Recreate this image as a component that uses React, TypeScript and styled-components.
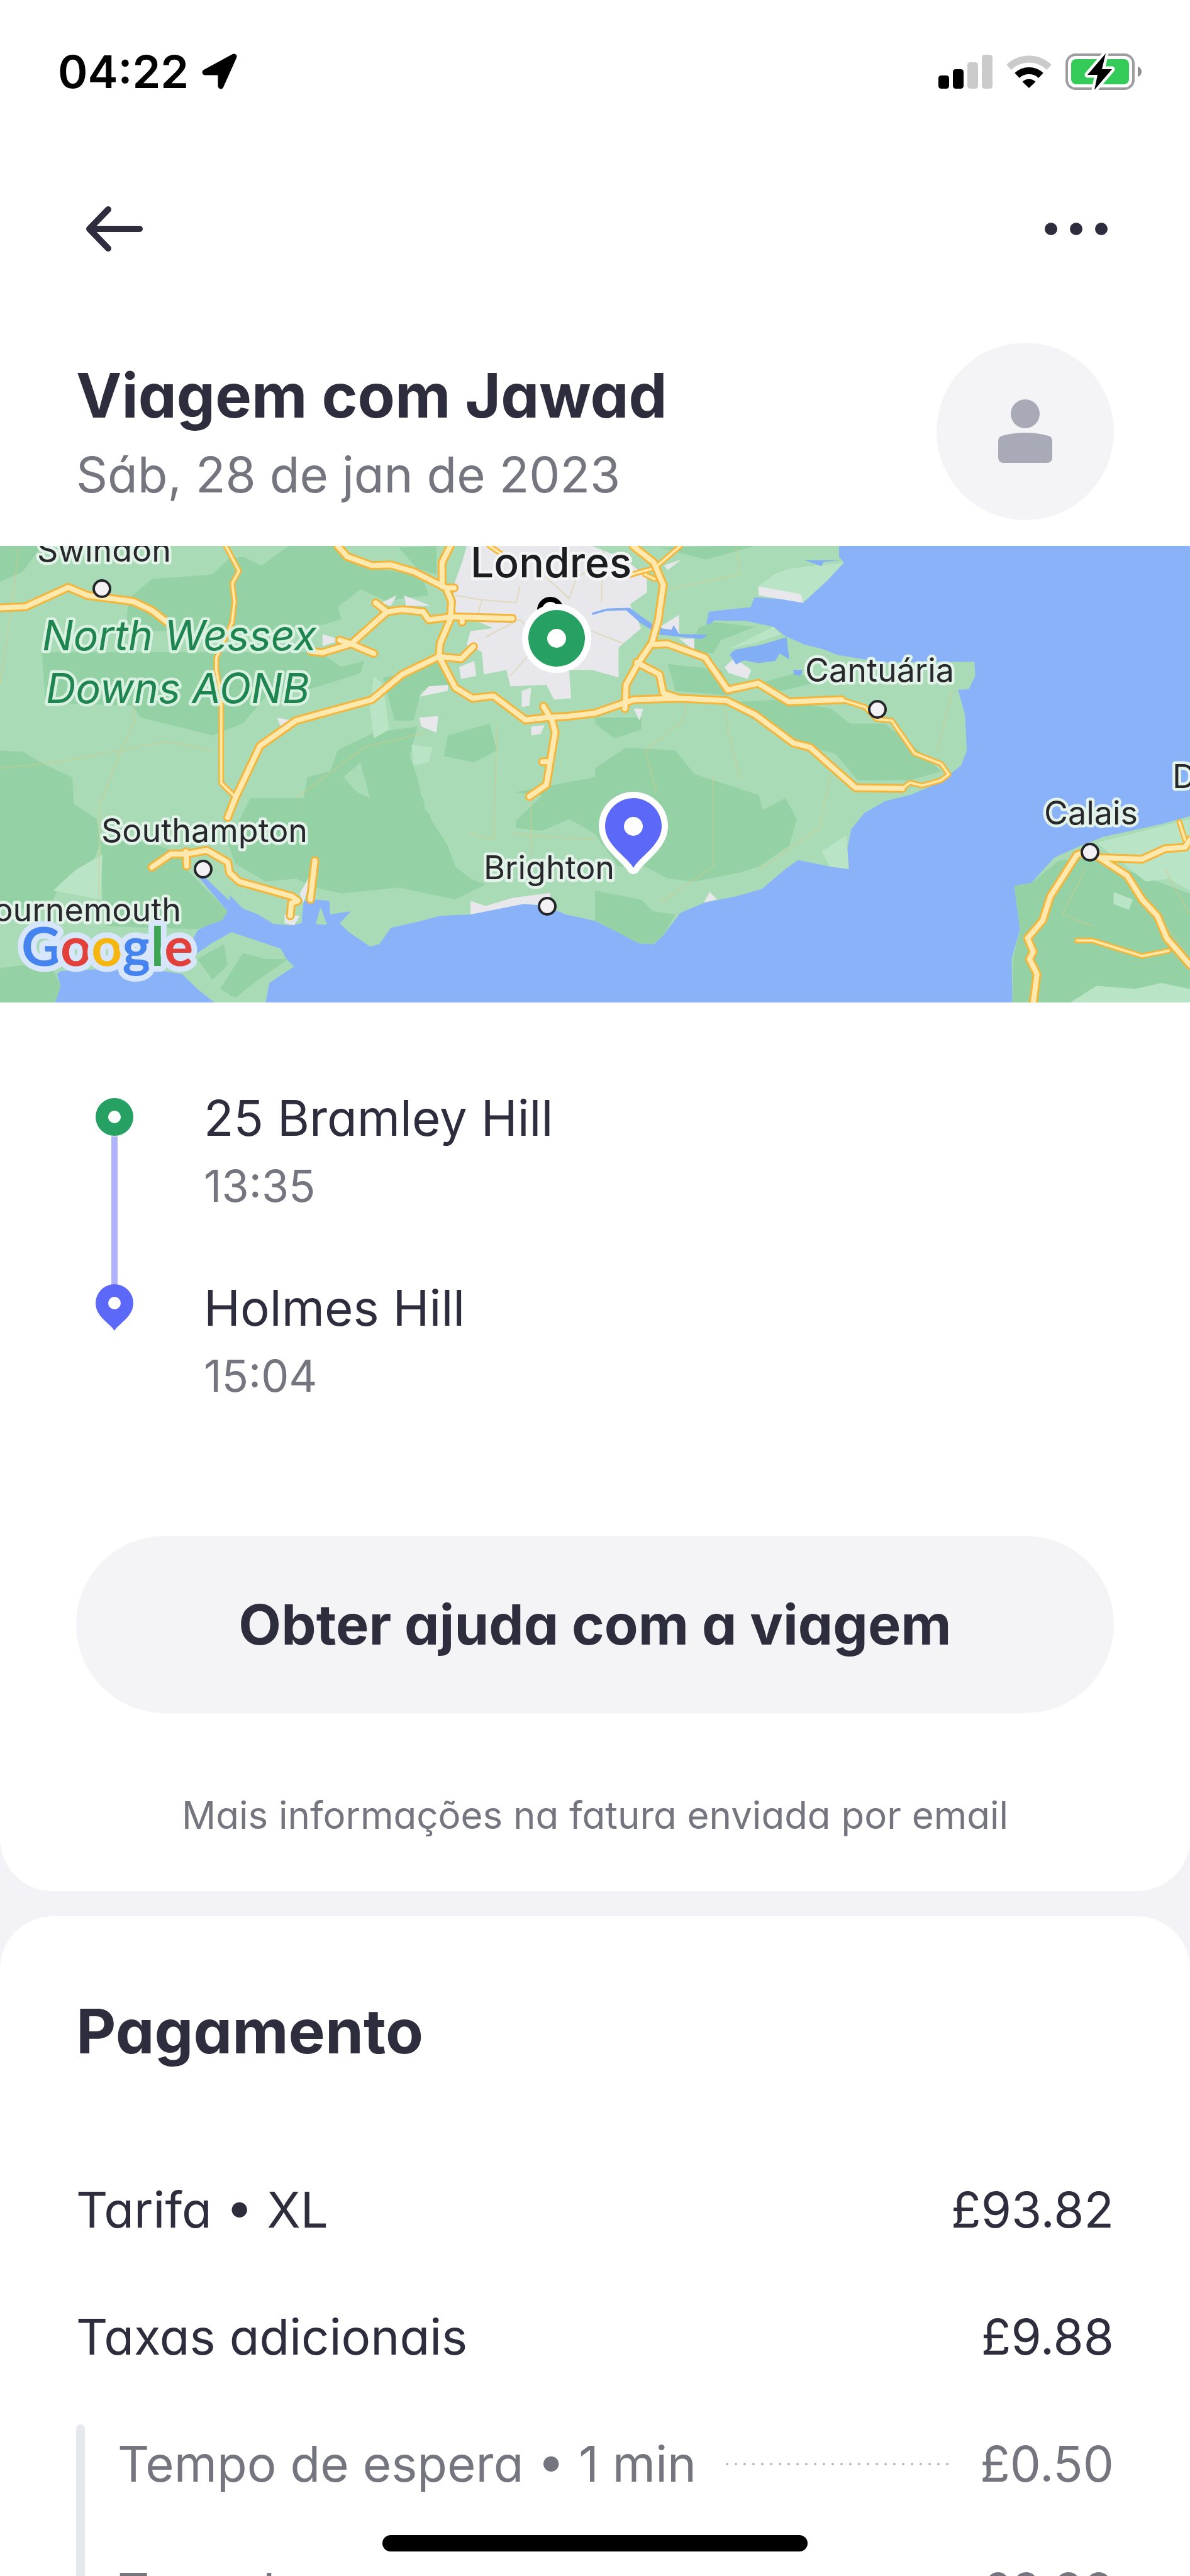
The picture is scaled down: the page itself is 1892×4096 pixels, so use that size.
import React from "react";
import styled, { createGlobalStyle } from "styled-components";

const color = {
  ink: "#2e2d3d",
  muted: "#74757e",
  surface: "#f4f4f7",
  canvas: "#f3f3f7",
  green: "#27a063",
  violet: "#5c68f8",
  violetSoft: "#b0b3fb",
  rule: "#e7e7ee",
};

const GlobalStyle = createGlobalStyle`
  *, *::before, *::after { box-sizing: border-box; }
  body { margin: 0; background: ${color.canvas}; }
  h1, h2, p, ul, ol { margin: 0; padding: 0; }
  ul, ol { list-style: none; }
  button { border: 0; padding: 0; background: none; font: inherit; color: inherit; cursor: pointer; }
  svg { display: block; }
`;

const Screen = styled.main`
  display: flex;
  flex-direction: column;
  gap: 40px;
  height: 100vh;
  overflow: hidden;
  background: ${color.canvas};
  color: ${color.ink};
  font-family: Inter, "Liberation Sans", sans-serif;
  font-feature-settings: "cv11";
  font-size: 78px;
  line-height: 108px;
`;

const Card = styled.section<{ $edge: "top" | "bottom" }>`
  flex: ${(p) => (p.$edge === "top" ? "none" : "1 0 auto")};
  background: #fff;
  border-radius: ${(p) => (p.$edge === "top" ? "0 0 84px 84px" : "84px 84px 0 0")};
`;

/* ---------- status bar ---------- */

const StatusBar = styled.div`
  display: flex;
  align-items: center;
  justify-content: space-between;
  height: 228px;
  padding: 0 76px 0 92px;
  color: #000;
`;

const StatusGroup = styled.div<{ $gap: number }>`
  display: flex;
  align-items: center;
  gap: ${(p) => p.$gap}px;
`;

const Clock = styled.time`
  font-size: 72px;
  font-weight: 600;
`;

const LocationIcon = () => (
  <svg width="60" height="60" viewBox="0 0 60 60" aria-hidden="true">
    <path d="M52 6 31 53V31H6Z" fill="#000" stroke="#000" strokeWidth="9" strokeLinejoin="round" />
  </svg>
);

const SignalIcon = () => (
  <svg width="86" height="56" viewBox="0 0 86 56" aria-hidden="true">
    <rect x="0" y="34" width="17" height="21" rx="4.5" fill="#000" />
    <rect x="23" y="24" width="17" height="31" rx="4.5" fill="#000" />
    <rect x="46" y="13" width="17" height="42" rx="4.5" fill="#cbcbcb" />
    <rect x="69" y="1" width="17" height="54" rx="4.5" fill="#cbcbcb" />
  </svg>
);

const WifiIcon = () => (
  <svg width="74" height="56" viewBox="0 0 74 56" aria-hidden="true">
    <g fill="none" strokeWidth="11">
      <path d="M5 21A46 46 0 0 1 69 21" stroke="#cbcbcb" />
      <path d="M18 34A28 28 0 0 1 56 34" stroke="#000" />
    </g>
    <path d="M37 54 26.500 44A15 15 0 0 1 47.500 44Z" fill="#000" />
  </svg>
);

const BatteryIcon = () => (
  <svg width="122" height="60" viewBox="0 0 122 60" aria-hidden="true">
    <rect x="2" y="3" width="106" height="54" rx="14" fill="none" stroke="#9d9d9f" strokeWidth="4" />
    <rect x="9" y="10" width="92" height="40" rx="8" fill="#34cb59" />
    <path d="M115 22C123 24 123 36 115 38Z" fill="#8f8f92" />
    <path
      d="M64 1 35 35H51L46 59 74 26H58Z"
      fill="#000"
      stroke="#fff"
      strokeWidth="9"
      strokeLinejoin="round"
      paintOrder="stroke"
    />
  </svg>
);

/* ---------- navigation and title ---------- */

const NavBar = styled.nav`
  display: flex;
  align-items: center;
  justify-content: space-between;
  height: 272px;
  padding: 0 121px;
`;

const IconButton = styled.button`
  width: 120px;
  height: 120px;
`;

const Header = styled.header`
  display: flex;
  align-items: flex-start;
  justify-content: space-between;
  padding: 45px 121px 41px;
`;

const TitleBlock = styled.div`
  padding-top: 24px;
`;

const Title = styled.h1`
  font-size: 97px;
  line-height: 120px;
  font-weight: 700;
`;

const TripDate = styled.p`
  line-height: 132px;
  color: ${color.muted};
`;

const Avatar = styled.div`
  display: grid;
  place-items: center;
  width: 282px;
  height: 282px;
  border-radius: 50%;
  background: ${color.surface};
`;

/* ---------- map ---------- */

const MapFrame = styled.div`
  height: 726px;
  overflow: hidden;
  background: #89b2f8;

  svg {
    width: 100%;
    height: 100%;
  }
`;

const MapText = styled.text<{ $size?: number }>`
  font-family: Inter, "Liberation Sans", sans-serif;
  font-feature-settings: normal;
  font-size: ${(p) => p.$size ?? 52}px;
  fill: #26282b;
  stroke: #e4f3ea;
  stroke-width: 9px;
  stroke-linejoin: round;
  paint-order: stroke;
`;

const CapitalText = styled(MapText)`
  font-weight: 500;
  fill: #1c1d20;
  stroke: #f4f4f5;
`;

const ParkText = styled(MapText)`
  font-style: italic;
  fill: #1f8550;
  stroke: #d9f1e0;
`;

const BrandText = styled.text`
  font-family: Lato, "Liberation Sans", sans-serif;
  font-size: 86px;
  font-weight: 700;
  stroke: #d8e6fb;
  stroke-width: 18px;
  stroke-linejoin: round;
  paint-order: stroke;
`;

const plot = (grid: string) =>
  grid
    .trim()
    .split(/\s+/)
    .map((pair) => {
      const [x, y] = pair.split(",").map(Number);
      return `${(x * 0.6033).toFixed(1)},${((y - 14) * 0.474).toFixed(1)}`;
    })
    .join(" ");

const land = [
  "0,14 2211,14 2211,50 2224,70 2180,130 2116,205 2060,192 1988,187 1978,220 1913,228 1868,235 1858,300 1808,318 1740,305 1808,322 1868,310 1880,264 1968,266 2038,285 2068,315 2120,345 2168,360 2208,380 2328,405 2568,402 2570,450 2553,495 2525,497 2543,580 2548,700 2533,750 2473,810 2398,850 2333,870 2278,910 2243,965 2233,1030 2237,1098 2188,1090 2103,1068 2068,1100 2008,1165 1938,1190 1858,1210 1793,1245 1748,1320 1723,1350 1688,1348 1628,1310 1568,1272 1490,1250 1440,1222 1380,1215 1300,1235 1240,1250 1160,1255 1100,1275 1030,1295 1000,1350 975,1358 920,1310 895,1280 925,1240 870,1250 868,1205 830,1200 800,1205 795,1280 765,1287 720,1282 680,1250 640,1230 605,1185 605,1205 560,1150 540,1125 520,1120 560,1180 600,1240 585,1270 545,1285 520,1305 510,1330 430,1410 330,1430 160,1440 150,1450 160,1490 145,1546 0,1546",
  "610,1310 670,1335 740,1365 755,1400 775,1425 710,1480 700,1546 565,1546 520,1500 480,1450 430,1440 440,1420 520,1380 560,1345",
  "845,1225 862,1285 832,1283",
  "2668,1546 2666,1400 2688,1300 2673,1155 2718,1145 2778,1060 2848,1020 2908,990 3068,945 3136,920 3136,1546",
];

const woodland = [
  "0,14 110,14 60,100 0,135",
  "0,700 60,705 130,755 190,790 195,880 255,930 265,1010 250,1060 160,1150 140,1200 100,1230 0,1230",
  "265,1000 400,1010 480,1050 500,1110 570,1200 600,1240 585,1270 520,1300 280,1290 270,1200",
  "340,190 400,125 560,110 600,60 640,50 690,80 760,14 900,14 920,60 980,90 1110,110 1130,180 1060,190 1020,200 950,160 890,220 900,260 820,290 600,300 330,300",
  "110,370 840,370 900,420 960,400 950,440 880,470 800,500 700,520 640,610 560,650 500,630 370,590 350,550 120,540",
  "985,640 1100,620 1080,720 1100,790 1110,850 1140,940 1180,1020 1200,1090 1240,1130 1280,1150 1200,1200 1050,1160 900,1180 830,1160 780,1130 700,1140 620,1080 600,1010 660,860 800,860 810,790 870,770 890,700",
  "1180,650 1290,610 1310,700 1250,740 1170,720",
  "1010,455 1090,440 1150,400 1185,480 1110,500 1090,600 1040,600",
  "1360,840 1568,790 1568,980 1500,930 1430,970 1360,960",
  "1568,760 1650,690 1780,700 1830,780 1880,800 2000,850 2010,900 2070,860 2100,930 2080,1020 2000,1090 1950,1110 1830,1140 1760,1130 1700,1090 1630,1090 1568,980",
  "1900,540 2050,530 2190,560 2240,610 2330,610 2420,700 2480,770 2400,800 2260,800 2200,710 2130,690",
  "1760,410 1900,430 1930,500 2100,440 2160,470 2060,500 1990,480 1918,515 1780,500",
  "1840,290 1880,270 1990,285 1900,330 1880,375 1820,370",
  "1568,1170 1690,1200 1720,1240 1780,1250 1748,1320 1720,1350 1680,1345 1568,1270",
  "1568,590 1690,590 1690,630 1620,660 1568,610",
  "1740,20 1860,60 1990,14 1900,14",
  "1050,20 1150,14 1150,110 1100,90",
  "520,1400 590,1350 600,1420 560,1470",
  "640,1380 700,1400 760,1400 680,1470 620,1530 580,1500",
  "0,1430 130,1410 160,1490 145,1546 0,1546",
  "2668,1546 2670,1400 2688,1300 2673,1155 2718,1145 2790,1070 2880,1060 3136,1180 3136,1546",
];

const meadow = [
  "1998,150 2040,110 2080,90 2224,70 2180,130 2116,205",
  "1968,330 2038,285 2058,310 1990,340 1920,360",
  "140,1170 200,1100 270,1050 265,1200",
  "985,450 1010,480 1025,630 985,660 975,560",
  "1085,680 1140,690 1130,740 1090,750",
  "2165,1040 2230,985 2237,1098 2188,1090",
  "2890,1010 3060,955 3136,930 3136,1170 3080,1130 3020,1140 2960,1080",
  "2820,1546 2890,1490 2990,1500 3060,1480 3136,1500 3136,1546",
  "2935,1175 2985,1200 2975,1235 2935,1215",
];

const clearings = [
  "905,790 950,740 975,860 940,840",
  "1110,790 1200,750 1360,800 1350,840 1430,850 1340,960 1200,980 1120,900",
];

const urban = [
  "1220,60 1230,14 1560,14 1650,60 1705,120 1705,170 1660,210 1690,290 1630,355 1630,455 1560,430 1500,430 1505,525 1460,530 1440,480 1345,485 1335,430 1275,445 1270,370 1230,345 1240,300 1300,290 1200,235 1195,150",
  "1105,520 1130,485 1180,480 1180,500",
  "1105,590 1155,585 1150,640 1110,620",
  "1210,420 1250,400 1255,450 1215,460",
  "1375,500 1400,490 1395,550 1375,555",
  "1400,620 1435,615 1425,645 1400,650",
  "1065,180 1135,215 1070,215",
  "1005,205 1045,180 1030,215",
  "850,310 900,330 850,350",
  "1740,285 1790,245 1790,320",
  "1790,325 1830,325 1830,365",
  "1910,420 1935,390 1980,430 1970,460 1920,440",
  "1998,150 2110,175 2116,205 2000,180",
  "1670,560 1695,560 1685,600",
  "1750,80 1795,60 1760,95",
  "1240,1205 1280,1222 1350,1195 1450,1178 1450,1222 1380,1215 1300,1235 1240,1250",
  "1855,1210 1870,1175 1890,1200",
  "730,590 770,600 740,620",
  "790,1180 830,1090 800,1210",
  "750,1250 790,1255 775,1287 750,1280",
];

const inlets = [
  "1923,378 1938,362 2008,345 2073,320 2080,395 2055,375 2043,400 1998,407 1960,398 1940,412",
  "1560,238 1600,224 1660,222 1690,250 1735,290 1770,295 1775,280 1790,310 1865,312 1850,326 1740,312 1690,275 1650,230 1600,232 1560,246",
  "2090,430 2115,430 2110,450 2092,445",
  "2120,62 2215,62 2170,68 2165,82",
];

const lanes = [
  "0,760 150,740 440,670 560,700",
  "260,1200 262,880 320,700 355,600 350,540",
  "780,860 960,690 1120,640",
  "1310,620 1300,1000 1240,980",
  "1400,860 1400,1050",
  "1350,980 1568,1000",
  "1730,840 1700,700 1800,600 1810,540",
  "1910,560 1920,640 1950,790",
  "1880,790 1880,1090 1740,1210",
  "2190,780 2160,960 2000,1100",
  "2510,500 2470,700",
  "1940,20 1950,110 1760,160",
  "0,480 30,220 50,20",
  "1200,180 1270,195 1260,240",
  "1270,195 1360,205 1370,150",
  "1420,40 1440,120 1500,190",
  "1500,190 1520,120 1600,60",
  "1280,320 1370,260 1400,300",
  "1560,300 1640,340",
  "1345,450 1400,370",
  "1590,30 1585,200",
  "2860,1100 2800,1250 2880,1290",
  "3070,1100 3136,1250",
  "3080,1300 3136,1400",
];

const roads = [
  "1640,120 1680,104 1715,92",
  "1290,14 1320,40",
  "595,14 630,98 612,140 618,200 612,270 570,390 570,430 583,520 583,810 615,850",
  "2218,530 2280,555 2310,595 2350,600 2410,710 2480,745 2500,780 2480,800 2430,818 2398,808 2378,828",
  "2838,1338 2880,1338 3010,1390 3080,1372",
  "1793,14 1733,80",
  "3108,940 3123,1000",
  "1700,110 1725,125",
];

const motorways = [
  "0,222 68,218 180,153 230,180 350,200 400,230 445,275",
  "820,368 850,372 925,343 1020,235 1060,228 1115,235 1130,262 1190,252 1350,257",
  "990,205 1020,235",
  "895,330 925,343 985,375",
  "1187,14 1165,70 1165,150",
  "1175,155 1197,155",
  "890,14 915,50 980,80 1030,78 1090,100 1175,155 1190,200 1187,260 1160,340 1157,385 1200,490 1245,525 1300,517 1385,598 1440,590 1500,585 1568,575 1670,530 1790,525 1915,533 1990,580 2090,675 2135,690 2210,775 2255,825 2378,828",
  "1157,385 1215,393 1248,352",
  "1157,385 1060,445 980,530 780,600 685,685 620,860 600,925",
  "400,1092 450,1048 490,1048 545,1035 600,1075 605,1110 630,1140 770,1190 785,1205 768,1212 765,1255",
  "490,1040 492,1088",
  "830,1070 818,1200",
  "1432,552 1455,600 1463,640 1440,815 1395,855",
  "1430,738 1448,738",
  "1218,257 1218,270",
  "1668,14 1723,70 1748,145 1735,262 1718,340 1683,405 1650,480 1647,560",
  "1678,405 1738,445 1748,508 1790,525",
  "1718,345 1758,342 1858,388 1918,497 1998,475 2078,537 2218,530",
  "2868,1040 2838,1050 2768,1190 2748,1270 2708,1330 2723,1375 2713,1400 2733,1450 2723,1546",
  "2898,1060 3010,1065 3070,1030 3123,1025 3136,1000",
  "2868,1040 2898,1060 2970,1120 3010,1200 3050,1255 3075,1330 3136,1420",
];

const Shapes = ({ items, fill }: { items: string[]; fill: string }) => (
  <g fill={fill}>
    {items.map((grid) => (
      <polygon key={grid} points={plot(grid)} />
    ))}
  </g>
);

const Lines = ({ items, stroke, width }: { items: string[]; stroke: string; width: number }) => (
  <g fill="none" stroke={stroke} strokeWidth={width} strokeLinecap="round" strokeLinejoin="round">
    {items.map((grid) => (
      <polyline key={grid} points={plot(grid)} />
    ))}
  </g>
);

const towns = [
  [162, 68],
  [323, 514],
  [870, 573],
  [1395, 260],
  [1733, 487],
];

const PIN_PATH = "M0 66C-10 48-45 30-45 0A45 45 0 1 1 45 0C45 30 10 48 0 66Z";

const TripMap = () => (
  <MapFrame>
    <svg viewBox="0 0 1892 726" preserveAspectRatio="xMidYMid slice" role="img" aria-label="Mapa da viagem">
      <Shapes items={land} fill="#a9dbb6" />
      <Shapes items={woodland} fill="#94d2a5" />
      <Shapes items={clearings} fill="#a9dbb6" />
      <Shapes items={meadow} fill="#bae4c6" />
      <Shapes items={urban} fill="#e8e8ec" />
      <Shapes items={inlets} fill="#82aef5" />
      <g opacity="0.45">
        <Lines items={lanes} stroke="#d9c987" width={2} />
      </g>
      <Lines items={roads} stroke="#f5b53a" width={9} />
      <Lines items={motorways} stroke="#f5b53a" width={14} />
      <Lines items={roads} stroke="#ffe7a6" width={4} />
      <Lines items={motorways} stroke="#ffe9ae" width={8} />
      <g fill="#f3f1f3" stroke="#24262a" strokeWidth="4">
        {towns.map(([x, y]) => (
          <circle key={x} cx={x} cy={y} r="13" />
        ))}
      </g>
      <circle cx="875" cy="102" r="17" fill="#fff" stroke="#000" strokeWidth="8" />
      <MapText x="59" y="25">Swindon</MapText>
      <MapText x="161" y="471">Southampton</MapText>
      <MapText x="288" y="597" textAnchor="end">Bournemouth</MapText>
      <MapText x="769" y="530">Brighton</MapText>
      <MapText x="1280" y="216">Cantuária</MapText>
      <MapText x="1660" y="443">Calais</MapText>
      <MapText x="1864" y="385">Dunquerque</MapText>
      <CapitalText x="748" y="50" $size={66}>Londres</CapitalText>
      <ParkText x="67" y="166" $size={66}>North Wessex</ParkText>
      <ParkText x="73" y="250" $size={66}>Downs AONB</ParkText>
      <BrandText x="34" y="668">
        <tspan fill="#4583ee">G</tspan>
        <tspan fill="#e2403a">o</tspan>
        <tspan fill="#f4b60f">o</tspan>
        <tspan fill="#4583ee">g</tspan>
        <tspan fill="#3da553">l</tspan>
        <tspan fill="#e2403a">e</tspan>
      </BrandText>
      <circle cx="885" cy="147" r="55" fill="#fff" />
      <circle cx="885" cy="147" r="45" fill={color.green} />
      <circle cx="885" cy="147" r="15" fill="#fff" />
      <g transform="translate(1007 446)">
        <path d={PIN_PATH} fill={color.violet} stroke="#fff" strokeWidth="20" strokeLinejoin="round" paintOrder="stroke" />
        <circle r="15" fill="#fff" />
      </g>
    </svg>
  </MapFrame>
);

/* ---------- stops ---------- */

const Stops = styled.ol`
  padding: 130px 121px 0 152px;
`;

const Stop = styled.li`
  display: flex;
  gap: 112px;
`;

const Track = styled.div<{ $start: number }>`
  display: flex;
  flex-direction: column;
  align-items: center;
  width: 60px;
  padding-top: ${(p) => p.$start}px;
`;

const TrackLine = styled.span`
  flex: 1;
  width: 10px;
  margin-bottom: -20px;
  background: ${color.violetSoft};
`;

const StopText = styled.div<{ $last?: boolean }>`
  padding-bottom: ${(p) => (p.$last ? 0 : 86)}px;
`;

const StopTime = styled.p`
  font-size: 70px;
  color: ${color.muted};
`;

const StartMark = () => (
  <svg width="60" height="62" viewBox="0 0 60 62" aria-hidden="true">
    <circle cx="30" cy="31" r="20" fill="#fff" stroke={color.green} strokeWidth="20" />
  </svg>
);

const EndMark = () => (
  <svg width="60" height="76" viewBox="0 0 60 76" aria-hidden="true">
    <path d="M30 75C23 63 0 53 0 31A30 30 0 1 1 60 31C60 53 37 63 30 75Z" fill={color.violet} />
    <circle cx="30" cy="31" r="10" fill="#fff" />
  </svg>
);

/* ---------- actions ---------- */

const Actions = styled.div`
  display: flex;
  flex-direction: column;
  gap: 120px;
  padding: 200px 121px 79px;
`;

const HelpButton = styled.button`
  height: 282px;
  border-radius: 141px;
  background: ${color.surface};
  font-size: 88px;
  font-weight: 700;
`;

const Note = styled.p`
  font-size: 60px;
  line-height: 84px;
  text-align: center;
  color: ${color.muted};
`;

/* ---------- payment ---------- */

const Payment = styled(Card)`
  padding: 123px 121px 0;
`;

const SectionTitle = styled.h2`
  margin-bottom: 170px;
  font-size: 98px;
  line-height: 120px;
  font-weight: 700;
`;

const PriceList = styled.ul`
  display: flex;
  flex-direction: column;
  gap: 94px;
`;

const PriceRow = styled.li`
  display: flex;
  align-items: center;
  justify-content: space-between;
  gap: 42px;
`;

const FeeGroup = styled.div`
  display: flex;
  gap: 52px;
  margin-top: 85px;
  color: ${color.muted};

  &::before {
    content: "";
    width: 14px;
    border-radius: 7px;
    background: ${color.rule};
  }
`;

const FeeList = styled(PriceList)`
  flex: 1;
  padding-top: 9px;
`;

const Leader = styled.span`
  flex: 1;
  height: 4px;
  background: radial-gradient(circle, #b9b9c2 2px, transparent 2px) 0 0 / 14px 4px repeat-x;
`;

const HomeIndicator = styled.div`
  position: fixed;
  bottom: 39px;
  left: 50%;
  width: 676px;
  height: 26px;
  margin-left: -338px;
  border-radius: 13px;
  background: #000;
`;

const prices = [
  { label: "Tarifa • XL", amount: "£93.82" },
  { label: "Taxas adicionais", amount: "£9.88" },
];

const fees = [
  { label: "Tempo de espera • 1 min", amount: "£0.50" },
  { label: "Taxa de reserva", amount: "£9.38" },
];

export default function App() {
  return (
    <>
      <GlobalStyle />
      <Screen>
        <Card $edge="top">
          <StatusBar>
            <StatusGroup $gap={20}>
              <Clock>04:22</Clock>
              <LocationIcon />
            </StatusGroup>
            <StatusGroup $gap={21}>
              <SignalIcon />
              <WifiIcon />
              <BatteryIcon />
            </StatusGroup>
          </StatusBar>
          <NavBar>
            <IconButton type="button" aria-label="Voltar">
              <svg width="120" height="120" viewBox="0 0 120 120" fill="none" stroke={color.ink} strokeWidth="10" strokeLinecap="round" strokeLinejoin="round" aria-hidden="true">
                <path d="M101 60H21M51 29 21 60 51 91" />
              </svg>
            </IconButton>
            <IconButton type="button" aria-label="Mais opções">
              <svg width="120" height="120" viewBox="0 0 120 120" fill={color.ink} aria-hidden="true">
                <circle cx="20" cy="60" r="10" />
                <circle cx="60" cy="60" r="10" />
                <circle cx="100" cy="60" r="10" />
              </svg>
            </IconButton>
          </NavBar>
          <Header>
            <TitleBlock>
              <Title>Viagem com Jawad</Title>
              <TripDate>Sáb, 28 de jan de 2023</TripDate>
            </TitleBlock>
            <Avatar>
              <svg width="86" height="102" viewBox="0 0 86 102" fill="#a9aab8" aria-hidden="true">
                <circle cx="43" cy="23" r="23" />
                <path d="M0 66Q0 60 6 58Q43 48 80 58Q86 60 86 66V92Q86 101 77 101H9Q0 101 0 92Z" />
              </svg>
            </Avatar>
          </Header>
          <TripMap />
          <Stops>
            <Stop>
              <Track $start={21}>
                <StartMark />
                <TrackLine />
              </Track>
              <StopText>
                <p>25 Bramley Hill</p>
                <StopTime>13:35</StopTime>
              </StopText>
            </Stop>
            <Stop>
              <Track $start={15}>
                <EndMark />
              </Track>
              <StopText $last>
                <p>Holmes Hill</p>
                <StopTime>15:04</StopTime>
              </StopText>
            </Stop>
          </Stops>
          <Actions>
            <HelpButton type="button">Obter ajuda com a viagem</HelpButton>
            <Note>Mais informações na fatura enviada por email</Note>
          </Actions>
        </Card>
        <Payment $edge="bottom">
          <SectionTitle>Pagamento</SectionTitle>
          <PriceList>
            {prices.map((row) => (
              <PriceRow key={row.label}>
                <span>{row.label}</span>
                <span>{row.amount}</span>
              </PriceRow>
            ))}
          </PriceList>
          <FeeGroup>
            <FeeList>
              {fees.map((row) => (
                <PriceRow key={row.label}>
                  <span>{row.label}</span>
                  <Leader />
                  <span>{row.amount}</span>
                </PriceRow>
              ))}
            </FeeList>
          </FeeGroup>
        </Payment>
        <HomeIndicator />
      </Screen>
    </>
  );
}
